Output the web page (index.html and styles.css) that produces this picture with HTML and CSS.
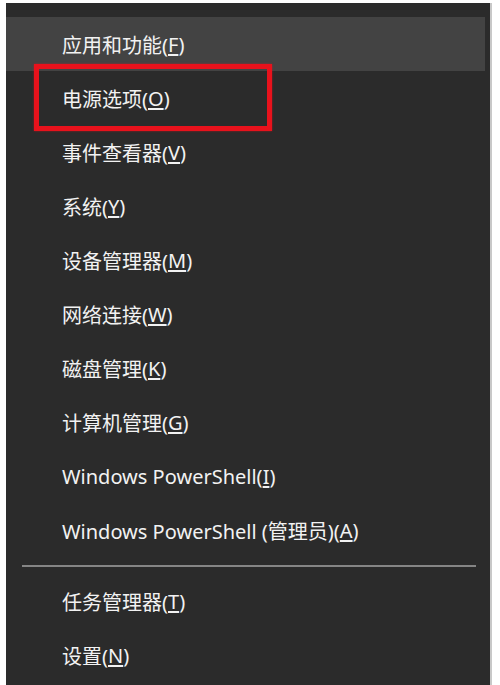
FILE: index.html
```html
<!DOCTYPE html>
<html lang="zh-CN">
<head>
  <meta charset="UTF-8"/>
  <title>快速链接菜单</title>
  <link rel="stylesheet" href="styles.css">
</head>
<body>
  <div class="menu">
    <!-- Win+X list -->
    <ul class="menu-list">
      <li class="menu-item hover">应用和功能(<u>F</u>)</li>
      <li class="menu-item">电源选项(<u>O</u>)</li>
      <li class="menu-item">事件查看器(<u>V</u>)</li>
      <li class="menu-item">系统(<u>Y</u>)</li>
      <li class="menu-item">设备管理器(<u>M</u>)</li>
      <li class="menu-item">网络连接(<u>W</u>)</li>
      <li class="menu-item">磁盘管理(<u>K</u>)</li>
      <li class="menu-item">计算机管理(<u>G</u>)</li>
      <li class="menu-item">Windows PowerShell(<u>I</u>)</li>
      <li class="menu-item">Windows PowerShell (管理员)(<u>A</u>)</li>
      <li class="separator"></li>
      <li class="menu-item">任务管理器(<u>T</u>)</li>
      <li class="menu-item">设置(<u>N</u>)</li>
    </ul>
    <div class="mark"></div>
  </div>
</body>
</html>
```

FILE: styles.css
```css
:root {
  --panel: #2b2b2b;
  --hover: #434343;
  --text: #f2f2f2;
  --line: #858585;
  --mark: #e8121c;
}

*, *::before, *::after {
  margin: 0;
  padding: 0;
  box-sizing: border-box;
}

html, body {
  height: 100%;
  overflow: hidden;
}

body {
  background: #ffffff;
  font-family: "Noto Sans", "Noto Sans CJK SC", sans-serif;
  font-size: 20px;
  color: var(--text);
}

/*—— PANEL ——*/
.menu {
  position: relative;
  margin: 3px 8px 0 6px;
  height: 700px;
  background: var(--panel);
  border-right: 2px solid #c8c8c8;
  padding-top: 14px;
}

.menu-list {
  list-style: none;
}

.menu-item {
  height: 54px;
  display: flex;
  align-items: center;
  padding-left: 56px;
  margin-right: 5px;
  white-space: nowrap;
}
.menu-item.hover {
  background: var(--hover);
}
.menu-item u {
  text-underline-offset: 2px;
}

.separator {
  height: 17px;
  display: flex;
  align-items: center;
  padding: 0 14px 0 16px;
}
.separator::after {
  content: '';
  flex: 1;
  height: 2px;
  background: var(--line);
}

/*—— RED ANNOTATION ——*/
.mark {
  position: absolute;
  left: 28px;
  top: 61px;
  width: 238px;
  height: 67px;
  border: 5px solid var(--mark);
  box-shadow: 0 0 2px rgba(232, 18, 28, 0.6);
}
```
